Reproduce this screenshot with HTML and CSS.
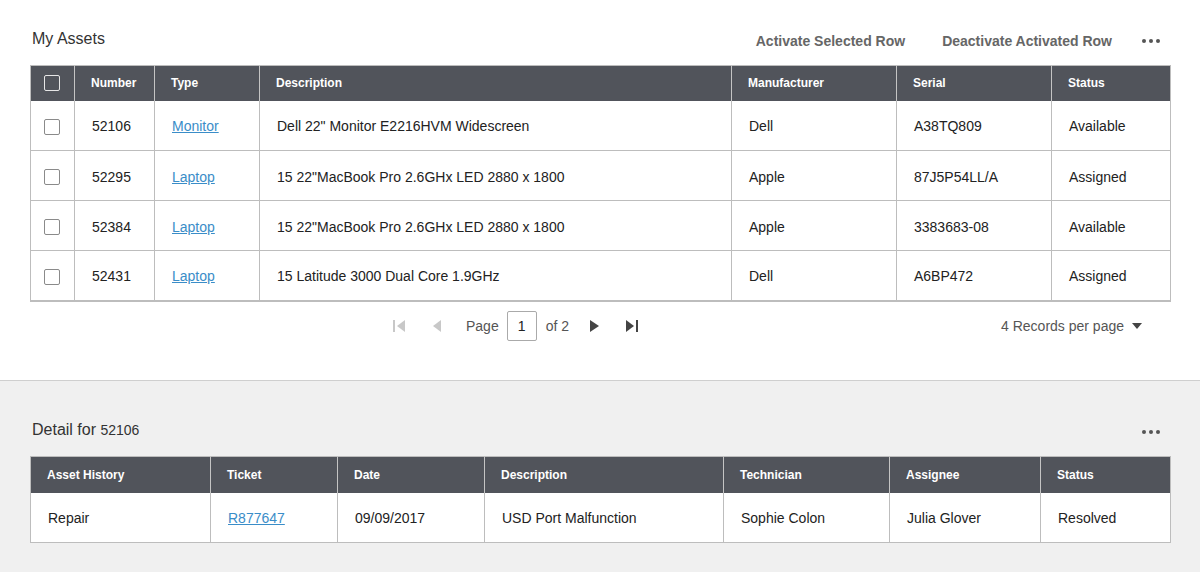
FILE: index.html
```html
<!DOCTYPE html>
<html>
<head>
<meta charset="utf-8">
<link rel="stylesheet" href="styles.css">
</head>
<body>
<section class="panel top">
  <div class="panel-head">
    <h2 class="title">My Assets</h2>
    <div class="actions">
      <button class="action">Activate Selected Row</button>
      <button class="action">Deactivate Activated Row</button>
      <span class="dots"><i></i><i></i><i></i></span>
    </div>
  </div>
  <table class="grid assets">
    <colgroup>
      <col style="width:44px"><col style="width:80px"><col style="width:105px"><col style="width:472px"><col style="width:165px"><col style="width:155px"><col style="width:119px">
    </colgroup>
    <thead>
      <tr><th class="cb"><span class="check hdr"></span></th><th>Number</th><th>Type</th><th>Description</th><th>Manufacturer</th><th>Serial</th><th>Status</th></tr>
    </thead>
    <tbody>
      <tr><td class="cb"><span class="check"></span></td><td>52106</td><td><a href="#">Monitor</a></td><td>Dell 22" Monitor E2216HVM Widescreen</td><td>Dell</td><td>A38TQ809</td><td>Available</td></tr>
      <tr><td class="cb"><span class="check"></span></td><td>52295</td><td><a href="#">Laptop</a></td><td>15 22"MacBook Pro 2.6GHx LED 2880 x 1800</td><td>Apple</td><td>87J5P54LL/A</td><td>Assigned</td></tr>
      <tr><td class="cb"><span class="check"></span></td><td>52384</td><td><a href="#">Laptop</a></td><td>15 22"MacBook Pro 2.6GHx LED 2880 x 1800</td><td>Apple</td><td>3383683-08</td><td>Available</td></tr>
      <tr><td class="cb"><span class="check"></span></td><td>52431</td><td><a href="#">Laptop</a></td><td>15 Latitude 3000 Dual Core 1.9GHz</td><td>Dell</td><td>A6BP472</td><td>Assigned</td></tr>
    </tbody>
  </table>
  <div class="pager">
    <div class="pages">
      <svg class="pg off" width="12" height="12" viewBox="0 0 12 12"><rect x="0" y="0" width="2" height="12"/><polygon points="12,0 12,12 4,6"/></svg>
      <svg class="pg off prev" width="9" height="12" viewBox="0 0 9 12"><polygon points="9,0 9,12 1,6"/></svg>
      <span class="lbl">Page</span>
      <span class="pagebox">1</span>
      <span class="lbl">of 2</span>
      <svg class="pg next" width="9" height="12" viewBox="0 0 9 12"><polygon points="0,0 0,12 9,6"/></svg>
      <svg class="pg last" width="12" height="12" viewBox="0 0 12 12"><polygon points="0,0 0,12 8,6"/><rect x="10" y="0" width="2" height="12"/></svg>
    </div>
    <div class="perpage">4 Records per page <svg width="10" height="6" viewBox="0 0 10 6"><polygon points="0,0 10,0 5,6"/></svg></div>
  </div>
</section>
<section class="panel bottom">
  <div class="panel-head">
    <h2 class="title">Detail for <span class="num">52106</span></h2>
    <div class="actions">
      <span class="dots"><i></i><i></i><i></i></span>
    </div>
  </div>
  <table class="grid detail">
    <colgroup>
      <col style="width:180px"><col style="width:127px"><col style="width:147px"><col style="width:239px"><col style="width:166px"><col style="width:151px"><col style="width:130px">
    </colgroup>
    <thead>
      <tr><th>Asset History</th><th>Ticket</th><th>Date</th><th>Description</th><th>Technician</th><th>Assignee</th><th>Status</th></tr>
    </thead>
    <tbody>
      <tr><td>Repair</td><td><a href="#">R877647</a></td><td>09/09/2017</td><td>USD Port Malfunction</td><td>Sophie Colon</td><td>Julia Glover</td><td>Resolved</td></tr>
    </tbody>
  </table>
</section>
</body>
</html>
```

FILE: styles.css
```css
* { box-sizing: border-box; }
html, body { margin: 0; padding: 0; }
body {
  font-family: "Liberation Sans", Arial, sans-serif;
  color: #222;
  background: #f0f0f0;
  width: 1200px;
  height: 572px;
  overflow: hidden;
}
.panel { padding: 0 30px; }
.panel.top {
  background: #fff;
  height: 381px;
  border-bottom: 1px solid #cfcfcf;
  padding-top: 20px;
}
.panel.bottom {
  background: #f0f0f0;
  padding-top: 30px;
}
.panel-head {
  height: 40px;
  margin-bottom: 5px;
  display: flex;
  align-items: center;
  justify-content: space-between;
  padding-left: 2px;
}
.title {
  margin: 0;
  font-size: 16px;
  font-weight: normal;
  color: #333;
  position: relative;
  top: -1px;
}
.title .num { font-size: 14px; }
.actions {
  display: flex;
  align-items: center;
  padding-right: 10px;
  position: relative;
  top: 1px;
}
.action {
  font-family: inherit;
  font-size: 14px;
  font-weight: bold;
  color: #666;
  background: none;
  border: 0;
  padding: 0;
  margin-right: 37px;
  cursor: pointer;
}
.action + .action { margin-right: 30px; }
.dots { display: flex; gap: 3px; }
.dots i {
  width: 4px; height: 4px;
  border-radius: 50%;
  background: #555;
  display: block;
}
.grid {
  width: 1140px;
  border-collapse: collapse;
  table-layout: fixed;
  border: 1px solid #bdbdbd;
  background: #fff;
}
.grid th {
  background: #51545b;
  color: #fff;
  font-size: 12px;
  font-weight: bold;
  text-align: left;
  height: 35px;
  padding: 0 16px;
  border-left: 1px solid #c4c4c4;
  vertical-align: middle;
}
.grid td {
  height: 50px;
  padding: 2px 17px 0;
  font-size: 14px;
  color: #222;
  border: 1px solid #bdbdbd;
  vertical-align: middle;
}
.detail td { padding-top: 1px; }
.grid tbody tr:first-child td { border-top: 0; }
.assets { border-bottom: 2px solid #bdbdbd; }
.grid th:first-child { border-left: 0; }
.grid a { color: #3a8dc8; text-decoration: underline; }
.grid th.cb { padding: 0 0 0 13px; }
.grid td.cb { padding: 3px 0 0 13px; }
.check {
  display: block;
  width: 16px; height: 16px;
  border: 1px solid #8a8a8a;
  border-radius: 2px;
  background: #fff;
}
.check.hdr { background: transparent; border-color: #e6e6e6; }
.detail th { height: 36px; }
.pager {
  margin-top: 9px;
  display: flex;
  align-items: center;
  justify-content: space-between;
  height: 30px;
}
.pages {
  display: flex;
  align-items: center;
  padding-left: 363px;
  font-size: 14px;
  color: #555;
}
.pg { display: block; fill: #444; }
.pg.off { fill: #c8c8c8; }
.pg.prev { margin-left: 27px; margin-right: 25px; }
.pagebox {
  width: 30px; height: 30px;
  border: 1px solid #aaa;
  border-radius: 2px;
  display: flex;
  align-items: center;
  justify-content: center;
  color: #222;
  margin: 0 9px 0 8px;
  background: #fff;
}
.pg.next { margin-left: 21px; margin-right: 27px; }
.perpage {
  font-size: 14px;
  color: #555;
  display: flex;
  align-items: center;
  gap: 8px;
  padding-right: 28px;
}
.perpage svg { fill: #444; }
```
